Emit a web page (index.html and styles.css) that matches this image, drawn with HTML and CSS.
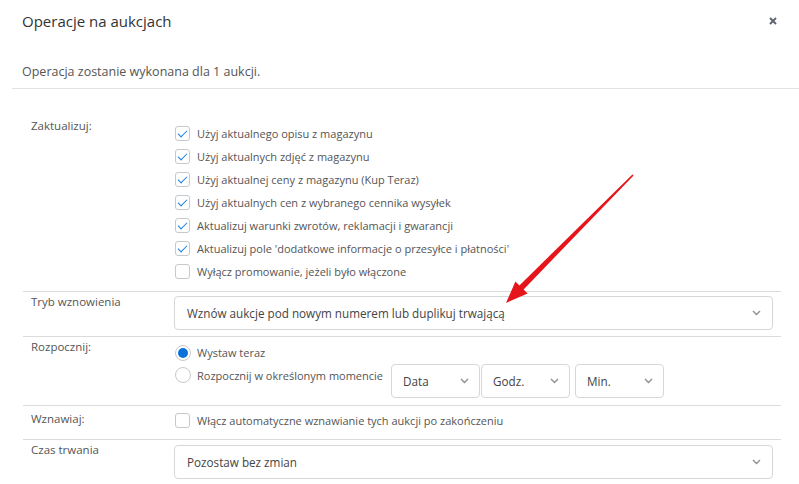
FILE: index.html
```html
<!DOCTYPE html>
<html lang="pl">
<head>
    <meta charset="UTF-8">
    <title>Operacje na aukcjach</title>
    <link rel="stylesheet" href="styles.css">
</head>
<body>
<div class="modal">
    <div class="modal-header">
        <h4 class="modal-title">Operacje na aukcjach</h4>
        <span class="close">
            <svg width="8" height="8" viewBox="0 0 8 8"><path d="M1 1L7 7M7 1L1 7" stroke="#5f6670" stroke-width="2"/></svg>
        </span>
    </div>
    <div class="modal-info">Operacja zostanie wykonana dla 1 aukcji.</div>

    <div class="modal-body">
        <div class="form-row">
            <div class="form-label">Zaktualizuj:</div>
            <ul class="check-list">
                <li><span class="cb checked"></span>Użyj aktualnego opisu z magazynu</li>
                <li><span class="cb checked"></span>Użyj aktualnych zdjęć z magazynu</li>
                <li><span class="cb checked"></span>Użyj aktualnej ceny z magazynu (Kup Teraz)</li>
                <li><span class="cb checked"></span>Użyj aktualnych cen z wybranego cennika wysyłek</li>
                <li><span class="cb checked"></span>Aktualizuj warunki zwrotów, reklamacji i gwarancji</li>
                <li><span class="cb checked"></span>Aktualizuj pole 'dodatkowe informacje o przesyłce i płatności'</li>
                <li><span class="cb"></span>Wyłącz promowanie, jeżeli było włączone</li>
            </ul>
        </div>

        <div class="form-row row-mode">
            <div class="form-label">Tryb wznowienia</div>
            <div class="select wide">
                <span>Wznów aukcje pod nowym numerem lub duplikuj trwającą</span>
                <svg class="chev" width="9" height="6" viewBox="0 0 9 6"><path d="M1 1l3.5 3.5L8 1" fill="none" stroke="#8c9096" stroke-width="1.4"/></svg>
            </div>
        </div>

        <div class="form-row">
            <div class="form-label">Rozpocznij:</div>
            <ul class="radio-list">
                <li><span class="rb checked"></span>Wystaw teraz</li>
                <li>
                    <span class="rb"></span>Rozpocznij w określonym momencie
                    <div class="time-selects">
                        <div class="select small">
                            <span>Data</span>
                            <svg class="chev" width="9" height="6" viewBox="0 0 9 6"><path d="M1 1l3.5 3.5L8 1" fill="none" stroke="#8c9096" stroke-width="1.4"/></svg>
                        </div>
                        <div class="select small">
                            <span>Godz.</span>
                            <svg class="chev" width="9" height="6" viewBox="0 0 9 6"><path d="M1 1l3.5 3.5L8 1" fill="none" stroke="#8c9096" stroke-width="1.4"/></svg>
                        </div>
                        <div class="select small gap">
                            <span>Min.</span>
                            <svg class="chev" width="9" height="6" viewBox="0 0 9 6"><path d="M1 1l3.5 3.5L8 1" fill="none" stroke="#8c9096" stroke-width="1.4"/></svg>
                        </div>
                    </div>
                </li>
            </ul>
        </div>

        <div class="form-row row-tight">
            <div class="form-label label-inline">Wznawiaj:</div>
            <ul class="check-list single">
                <li><span class="cb"></span>Włącz automatyczne wznawianie tych aukcji po zakończeniu</li>
            </ul>
        </div>

        <div class="form-row">
            <div class="form-label">Czas trwania</div>
            <div class="select wide">
                <span>Pozostaw bez zmian</span>
                <svg class="chev" width="9" height="6" viewBox="0 0 9 6"><path d="M1 1l3.5 3.5L8 1" fill="none" stroke="#8c9096" stroke-width="1.4"/></svg>
            </div>
        </div>
    </div>
</div>

<!-- red pointer drawn over the form -->
<svg class="pointer" width="799" height="484" viewBox="0 0 799 484">
    <polygon points="633.6,175.6 523.6,289.4 527.6,293.4 506,303 515.4,281.6 519.4,285.4 632.4,174.4" fill="#e6151b"/>
</svg>
</body>
</html>
```

FILE: styles.css
```css
*{margin: 0;padding: 0;box-sizing: border-box;}
body{font-family: "Open Sans", "Liberation Sans", sans-serif;color: #555;background: #fff;}

.modal{width: 799px;height: 484px;overflow: hidden;}

.modal-header{display: flex;justify-content: space-between;align-items: center;padding: 11px 22px 0 22px;height: 31px;}
.modal-title{font-size: 15px;font-weight: normal;color: #333;line-height: 20px;}
.close{display: flex;}

.modal-info{margin: 32px 0 0 12px;padding: 0 0 7px 10px;font-size: 12.5px;line-height: 18px;color: #555;border-bottom: 1px solid #e2e2e2;}

.modal-body{padding: 27px 18px 0 23px;}

.form-row{display: flex;padding: 4px 8px 6px 8px;border-top: 1px solid #dcdcdc;}
.form-row:first-child{border-top: none;padding-bottom: 8px;}
.row-mode .select.wide{margin-top: 0;}
.row-tight{padding-top: 3px;padding-bottom: 7px;}

.form-label{width: 143px;flex-shrink: 0;font-size: 11.5px;line-height: 12px;color: #555;}
.label-inline{padding-top: 4px;}

.check-list, .radio-list{list-style: none;font-size: 11px;color: #555;}
.check-list{padding-top: 2px;}
.check-list.single{padding-top: 0;}
.check-list li, .radio-list li{display: flex;align-items: center;height: 23px;white-space: nowrap;}

.cb{width: 15px;height: 15px;border: 1px solid #c6c9cc;border-radius: 3px;margin: 0 7px 0 1px;position: relative;flex-shrink: 0;background: #fff;}
.cb.checked::after{content: "";position: absolute;left: 4px;top: 1px;width: 4px;height: 8px;border-right: 1.6px solid #1a7ee0;border-bottom: 1.6px solid #1a7ee0;transform: rotate(45deg);}

.rb{width: 16px;height: 16px;border: 1px solid #c6c9cc;border-radius: 50%;margin: 0 6px 0 1px;position: relative;flex-shrink: 0;}
.rb.checked::after{content: "";position: absolute;left: 2px;top: 2px;width: 10px;height: 10px;border-radius: 50%;background: #0b72dc;}

.radio-list li:last-child{align-items: flex-start;height: 35px;line-height: 23px;}
.radio-list li:last-child .rb{margin-top: 3px;}

.time-selects{display: flex;margin-left: 8px;}

.select{display: flex;align-items: center;justify-content: space-between;border: 1px solid #d5d7da;border-radius: 4px;background: #fff;color: #444;font-size: 11.7px;}
.select.wide{flex: 1;height: 34px;padding: 0 11px 0 12px;margin-top: 1px;}
.select.small{width: 89px;height: 34px;padding: 0 10px 0 11px;margin-right: 1px;}
.select.gap{margin-left: 4px;}
.chev{flex-shrink: 0;}

.pointer{position: absolute;left: 0;top: 0;pointer-events: none;}
```
